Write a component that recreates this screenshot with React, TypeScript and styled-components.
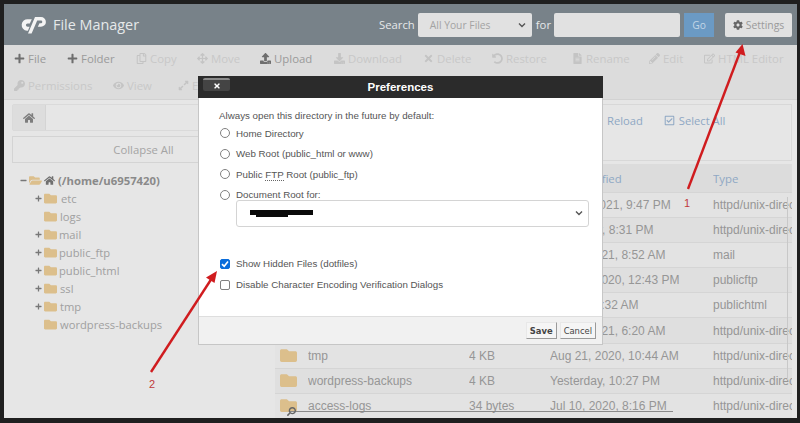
import React from "react";
import styled, { createGlobalStyle } from "styled-components";
import {
  FaPlus, FaRegCopy, FaArrowsAlt, FaUpload, FaDownload, FaTimes, FaUndoAlt, FaFileAlt, FaPencilAlt,
  FaRegEdit, FaKey, FaEye, FaExpandAlt, FaHome, FaCog, FaFolder, FaFolderOpen, FaRedoAlt, FaRegCheckSquare, FaMinus, FaSearch,
} from "react-icons/fa";

const Global = createGlobalStyle`
  html, body { margin: 0; padding: 0; background: #1f1f1f; }
  * { box-sizing: border-box; }
`;

const Frame = styled.div`
  position: relative;
  width: 800px;
  height: 423px;
  padding: 4px 3px 5px 4px;
  overflow: hidden;
  font-family: "Open Sans", sans-serif;
`;
const Page = styled.div`
  height: 100%;
  display: flex;
  flex-direction: column;
  background: #e6e6e6;
  overflow: hidden;
`;
const Header = styled.header`
  flex: none;
  height: 41px;
  display: flex;
  align-items: center;
  padding: 0 5px 0 16px;
  background: #788289;
  color: #eef0f1;
`;
const Logo = styled.svg`
  width: 26px;
  height: 18px;
  margin-right: 7px;
`;
const Title = styled.div`
  font-size: 14.4px;
  flex: 1;
  color: #e6e9ea;
`;
const SearchLabel = styled.span`
  font-size: 11.3px;
  margin-right: 3px;
  color: #e6e9ea;
`;
const FakeSelect = styled.div`
  width: 114px;
  height: 24px;
  margin-right: 4px;
  display: flex;
  align-items: center;
  justify-content: space-between;
  padding: 0 6px 0 12px;
  border-radius: 2px;
  background: #e1e1e1;
  color: #a3a3a3;
  font-size: 10.3px;
`;
const Chevron = styled.svg`
  width: 8px;
  height: 6px;
  flex: none;
`;
const ForLabel = styled(SearchLabel)`
  margin-right: 3px;
`;
const SearchInput = styled.div`
  width: 126px;
  height: 24px;
  margin-right: 4px;
  border-radius: 2px;
  background: #e1e1e1;
`;
const GoButton = styled.div`
  width: 30px;
  height: 24px;
  margin-right: 11px;
  display: flex;
  align-items: center;
  justify-content: center;
  background: #6b9ac4;
  color: #c3d6e6;
  font-size: 10.3px;
`;
const SettingsButton = styled.div`
  width: 67px;
  height: 24px;
  display: flex;
  align-items: center;
  justify-content: center;
  gap: 3px;
  border-radius: 2px;
  background: #e1e1e1;
  color: #9a9a9a;
  font-size: 10.4px;
  svg { color: #666; font-size: 10px; }
`;
const Toolbar = styled.div`
  flex: none;
  height: 55px;
  padding: 0 0 0 10px;
  background: #dcdcdc;
  border-bottom: 1px solid #d2d2d2;
`;
const ToolRow = styled.div`
  height: 27px;
  display: flex;
  align-items: center;
`;
const Tool = styled.div<{ $on?: boolean; $w: number }>`
  flex: none;
  width: ${(p) => p.$w}px;
  display: flex;
  align-items: center;
  gap: 3px;
  font-size: 11.4px;
  white-space: nowrap;
  color: ${(p) => (p.$on ? "#9a9a9a" : "#c8c8c8")};
  svg { flex: none; font-size: 11px; color: ${(p) => (p.$on ? "#6e6e6e" : "#c4c4c4")}; }
`;
const Main = styled.main`
  flex: 1;
  min-height: 0;
  display: flex;
  padding: 4px 5px 0 8px;
`;
const LeftPane = styled.aside`
  flex: none;
  width: 263px;
  display: flex;
  flex-direction: column;
`;
const PathBar = styled.div`
  height: 27px;
  display: flex;
  border: 1px solid #dadada;
  border-radius: 2px;
`;
const HomeButton = styled.div`
  width: 33px;
  display: flex;
  align-items: center;
  justify-content: center;
  background: #dddddd;
  border-right: 1px solid #d4d4d4;
  color: #7d7d7d;
  font-size: 12px;
`;
const CollapseAll = styled.div`
  height: 27px;
  margin-top: 5px;
  display: flex;
  align-items: center;
  justify-content: center;
  border: 1px solid #d4d4d4;
  color: #a4a4a4;
  font-size: 11.3px;
`;
const Tree = styled.ul`
  list-style: none;
  margin: 8px 0 0;
  padding: 0 0 0 8px;
`;
const TreeRow = styled.li<{ $root?: boolean }>`
  height: 18px;
  display: flex;
  align-items: center;
  padding-left: ${(p) => (p.$root ? "0" : "15px")};
  color: ${(p) => (p.$root ? "#8a8a8a" : "#a0a0a0")};
  font-size: ${(p) => (p.$root ? "11.3px" : "11.2px")};
  font-weight: ${(p) => (p.$root ? 700 : 400)};
  white-space: nowrap;
`;
const Toggle = styled.span`
  flex: none;
  width: 9px;
  display: flex;
  color: #777;
  font-size: 7px;
`;
const FolderMark = styled.span`
  flex: none;
  display: flex;
  margin-right: 2px;
  color: #dcbf8c;
  font-size: 13px;
`;
const RootHome = styled.span`
  display: flex;
  margin-right: 3px;
  color: #6f6f6f;
  font-size: 11px;
`;
const Offset = styled.span<{ $o: number }>`
  margin-left: ${(p) => p.$o}px;
`;
const RightPane = styled.section`
  flex: none;
  width: 517px;
  display: flex;
  flex-direction: column;
`;
const ActionBox = styled.div`
  flex: none;
  height: 57px;
  padding: 6px 0 0 316px;
  display: flex;
  align-items: flex-start;
  gap: 21px;
  border: 1px solid #d8d8d8;
`;
const ActionLink = styled.div`
  display: flex;
  align-items: center;
  gap: 4px;
  height: 18px;
  color: #8fa8c4;
  font-size: 11.2px;
  svg { font-size: 11px; }
`;
const Row = styled.div<{ $head?: boolean; $alt?: boolean }>`
  flex: none;
  height: ${(p) => (p.$head ? "29px" : "25.1px")};
  display: grid;
  grid-template-columns: 33px 161px 81px 163px 1fr;
  align-items: center;
  overflow: hidden;
  white-space: nowrap;
  font-family: ${(p) => (p.$head ? `"Open Sans", sans-serif` : `"Liberation Sans", Arial, sans-serif`)};
  font-size: ${(p) => (p.$head ? "11.4px" : "12px")};
  margin-top: ${(p) => (p.$head ? "3px" : "0")};
  color: ${(p) => (p.$head ? "#8fa8c4" : "#969696")};
  background: ${(p) => (p.$head ? "#dcdcdc" : p.$alt ? "#dfdfdf" : "#e3e3e3")};
  border-bottom: 1px solid #d5d5d5;
`;
const RowIcon = styled.span`
  display: flex;
  padding-left: 5px;
  color: #dcbf8c;
  font-size: 17px;
`;
const Cell = styled.span`
  overflow: hidden;
`;
const ScrollTrackV = styled.div`
  position: absolute;
  left: 787px;
  top: 197px;
  width: 1px;
  height: 183px;
  background: #c8c8c8;
`;
const ScrollTrackH = styled.div`
  position: absolute;
  left: 290px;
  top: 411px;
  width: 383px;
  height: 1px;
  background: #8a8a8a;
`;
const Magnifier = styled.span`
  position: absolute;
  left: 287px;
  top: 407px;
  display: flex;
  color: #666;
  font-size: 9px;
  transform: scaleX(-1);
`;
const Dialog = styled.div`
  position: absolute;
  left: 198px;
  top: 76px;
  width: 405px;
  height: 269px;
  display: flex;
  flex-direction: column;
  background: #fff;
  border: 1px solid #c6c6c6;
  border-top: none;
  font-family: "Liberation Sans", Arial, sans-serif;
`;
const DialogHead = styled.div`
  position: relative;
  flex: none;
  height: 22px;
  margin: 0 -1px;
  display: flex;
  align-items: center;
  justify-content: center;
  background: #2b2b2b;
  color: #fff;
  font-size: 11.5px;
  font-weight: 700;
`;
const CloseButton = styled.div`
  position: absolute;
  left: 5px;
  top: 2px;
  width: 27px;
  height: 13px;
  display: flex;
  align-items: center;
  justify-content: center;
  border-radius: 2px;
  border-top: 2px solid #8a8a8a;
  background: #444;
  color: #fff;
  font-size: 8px;
`;
const DialogBody = styled.div`
  flex: 1;
  padding: 11px 13px 0 20px;
  display: flex;
  flex-direction: column;
  color: #555;
  font-size: 9.75px;
`;
const Lead = styled.div`
  height: 14px;
  line-height: 14px;
`;
const Choice = styled.label<{ $gap?: number }>`
  display: flex;
  align-items: center;
  height: 14px;
  margin-top: ${(p) => p.$gap ?? 6.5}px;
`;
const RadioMark = styled.span`
  flex: none;
  width: 10px;
  height: 10px;
  margin: 0 6px 0 1px;
  border: 1px solid #808080;
  border-radius: 50%;
  background: #fff;
`;
const CheckMark = styled.span<{ $on?: boolean }>`
  flex: none;
  width: 10px;
  height: 10px;
  margin: 0 6px 0 1px;
  display: flex;
  align-items: center;
  justify-content: center;
  border-radius: 2px;
  border: 1px solid ${(p) => (p.$on ? "#0a6ddb" : "#808080")};
  background: ${(p) => (p.$on ? "#0a6ddb" : "#fff")};
`;
const Abbr = styled.span`
  border-bottom: 1px dotted #666;
  line-height: 10px;
`;
const DomainSelect = styled.div`
  height: 27px;
  margin: -2px 0 0 17px;
  display: flex;
  align-items: center;
  justify-content: space-between;
  padding: 0 5px 0 13px;
  border: 1px solid #d4d4d4;
  border-radius: 3px;
`;
const Redaction = styled.svg`
  width: 63px;
  height: 8px;
`;
const DialogFoot = styled.div`
  flex: none;
  height: 28px;
  display: flex;
  align-items: center;
  justify-content: flex-end;
  gap: 3px;
  padding: 0 6px 0 0;
  background: #f1f1f1;
  border-top: 1px solid #dedede;
`;
const FootButton = styled.div<{ $bold?: boolean }>`
  height: 17px;
  padding: 0 3px;
  display: flex;
  align-items: center;
  background: #f5f5f5;
  border: 1px solid #e8e8e8;
  border-right-color: #9a9a9a;
  border-bottom-color: #9a9a9a;
  color: #444;
  font-family: "DejaVu Sans", sans-serif;
  font-size: 8.4px;
  font-weight: ${(p) => (p.$bold ? 700 : 400)};
`;
const Annotations = styled.svg`
  position: absolute;
  left: 0;
  top: 0;
  width: 800px;
  height: 423px;
  pointer-events: none;
`;
const Note = styled.span<{ $x: number; $y: number }>`
  position: absolute;
  left: ${(p) => p.$x}px;
  top: ${(p) => p.$y}px;
  color: #c0393b;
  font-family: "Liberation Sans", Arial, sans-serif;
  font-size: 11px;
  line-height: 12px;
`;

const tree = [
  { n: "etc", t: true, o: 2 }, { n: "logs", t: false, o: 1 }, { n: "mail", t: true, o: 0 }, { n: "public_ftp", t: true, o: 0 },
  { n: "public_html", t: true, o: 0 }, { n: "ssl", t: true, o: 1 }, { n: "tmp", t: true, o: 1 }, { n: "wordpress-backups", t: false, o: 1 },
];
const rows = [
  ["etc", "4 KB", "Jan 10, 2021, 9:47 PM", "httpd/unix-directory"],
  ["logs", "4 KB", "Yesterday, 8:31 PM", "httpd/unix-directory"],
  ["mail", "4 KB", "Aug 1, 2021, 8:52 AM", "mail"],
  ["public_ftp", "4 KB", "Aug 21, 2020, 12:43 PM", "publicftp"],
  ["public_html", "4 KB", "Today, 10:32 AM", "publichtml"],
  ["ssl", "4 KB", "Aug 1, 2021, 6:20 AM", "httpd/unix-directory"],
  ["tmp", "4 KB", "Aug 21, 2020, 10:44 AM", "httpd/unix-directory"],
  ["wordpress-backups", "4 KB", "Yesterday, 10:27 PM", "httpd/unix-directory"],
  ["access-logs", "34 bytes", "Jul 10, 2020, 8:16 PM", "httpd/unix-directory"],
];

const Down = () => (
  <Chevron viewBox="0 0 8 6"><path d="M1 1.5 4 4.5 7 1.5" fill="none" stroke="#555" strokeWidth="1.4" /></Chevron>
);

export default function App() {
  return (
    <>
      <Global />
      <Frame>
        <Page>
          <Header>
            <Logo viewBox="0 0 26 18">
              <path d="M8 3.2h3.8L9.8 7.4H7.6a1.7 1.7 0 0 0 0 3.4h2l-1.7 4H7a5.8 5.8 0 0 1 1-11.6z" fill="#f4f4f4" />
              <path d="M15 1h6a4.9 4.9 0 0 1 0 9.8h-3.2l1.7-3.6H21a1.3 1.3 0 0 0 0-2.6h-3.8L11.6 17.5H8L15 1z" fill="#f4f4f4" />
            </Logo>
            <Title>File Manager</Title>
            <SearchLabel>Search</SearchLabel>
            <FakeSelect>All Your Files<Down /></FakeSelect>
            <ForLabel>for</ForLabel>
            <SearchInput />
            <GoButton>Go</GoButton>
            <SettingsButton><FaCog />Settings</SettingsButton>
          </Header>
          <Toolbar>
            <ToolRow>
              <Tool $on $w={53}><FaPlus />File</Tool>
              <Tool $on $w={69}><FaPlus />Folder</Tool>
              <Tool $w={61}><FaRegCopy />Copy</Tool>
              <Tool $w={63}><FaArrowsAlt />Move</Tool>
              <Tool $on $w={74}><FaUpload />Upload</Tool>
              <Tool $w={89}><FaDownload />Download</Tool>
              <Tool $w={69}><FaTimes />Delete</Tool>
              <Tool $w={80}><FaUndoAlt />Restore</Tool>
              <Tool $w={77}><FaFileAlt />Rename</Tool>
              <Tool $w={55}><FaPencilAlt />Edit</Tool>
              <Tool $w={82}><FaRegEdit />HTML Editor</Tool>
            </ToolRow>
            <ToolRow>
              <Tool $w={99}><FaKey />Permissions</Tool>
              <Tool $w={65}><FaEye />View</Tool>
              <Tool $w={60}><FaExpandAlt />Extract</Tool>
            </ToolRow>
          </Toolbar>
          <Main>
            <LeftPane>
              <PathBar><HomeButton><FaHome /></HomeButton></PathBar>
              <CollapseAll>Collapse All</CollapseAll>
              <Tree>
                <TreeRow $root>
                  <Toggle><FaMinus /></Toggle>
                  <FolderMark><FaFolderOpen /></FolderMark>
                  <RootHome><FaHome /></RootHome>
                  (/home/u6957420)
                </TreeRow>
                {tree.map((t) => (
                  <TreeRow key={t.n}>
                    <Toggle>{t.t ? <FaPlus /> : null}</Toggle>
                    <FolderMark><FaFolder /></FolderMark>
                    <Offset $o={t.o}>{t.n}</Offset>
                  </TreeRow>
                ))}
              </Tree>
            </LeftPane>
            <RightPane>
              <ActionBox>
                <ActionLink><FaRedoAlt />Reload</ActionLink>
                <ActionLink><FaRegCheckSquare />Select All</ActionLink>
              </ActionBox>
              <Row $head><Cell /><Cell>Name</Cell><Cell>Size</Cell><Cell>Last Modified</Cell><Cell>Type</Cell></Row>
              {rows.map((r, i) => (
                <Row key={r[0]} $alt={i % 2 === 1}>
                  <RowIcon><FaFolder /></RowIcon>
                  {r.map((c, j) => <Cell key={j}>{c}</Cell>)}
                </Row>
              ))}
            </RightPane>
          </Main>
        </Page>
        <ScrollTrackV />
        <ScrollTrackH />
        <Magnifier><FaSearch /></Magnifier>
        <Dialog>
          <DialogHead>
            <CloseButton><FaTimes /></CloseButton>
            Preferences
          </DialogHead>
          <DialogBody>
            <Lead>Always open this directory in the future by default:</Lead>
            <Choice $gap={3}><RadioMark />Home Directory</Choice>
            <Choice><RadioMark />Web Root (public_html or www)</Choice>
            <Choice><RadioMark /><span>Public <Abbr>FTP</Abbr> Root (public_ftp)</span></Choice>
            <Choice><RadioMark />Document Root for:</Choice>
            <DomainSelect>
              <Redaction viewBox="0 0 63 8"><path d="M0 1h63v5H38v2H6V6H0z" fill="#0a0a0a" /></Redaction>
              <Down />
            </DomainSelect>
            <Choice $gap={30}>
              <CheckMark $on>
                <svg width="8" height="8" viewBox="0 0 8 8"><path d="M1 4.2 3.2 6.3 7 1.6" fill="none" stroke="#fff" strokeWidth="1.6" /></svg>
              </CheckMark>
              Show Hidden Files (dotfiles)
            </Choice>
            <Choice $gap={7}><CheckMark />Disable Character Encoding Verification Dialogs</Choice>
          </DialogBody>
          <DialogFoot>
            <FootButton $bold>Save</FootButton>
            <FootButton>Cancel</FootButton>
          </DialogFoot>
        </Dialog>
        <Annotations viewBox="0 0 800 423">
          <line x1="688" y1="189" x2="740" y2="52" stroke="#d01c1f" strokeWidth="2.4" />
          <path d="M742.5 44 745.5 56 735.5 52.5z" fill="#d01c1f" />
          <line x1="151" y1="372" x2="212" y2="278" stroke="#d01c1f" strokeWidth="2.4" />
          <path d="M217 271 214.5 283 206 277.5z" fill="#d01c1f" />
        </Annotations>
        <Note $x={684} $y={197}>1</Note>
        <Note $x={149} $y={378}>2</Note>
      </Frame>
    </>
  );
}
